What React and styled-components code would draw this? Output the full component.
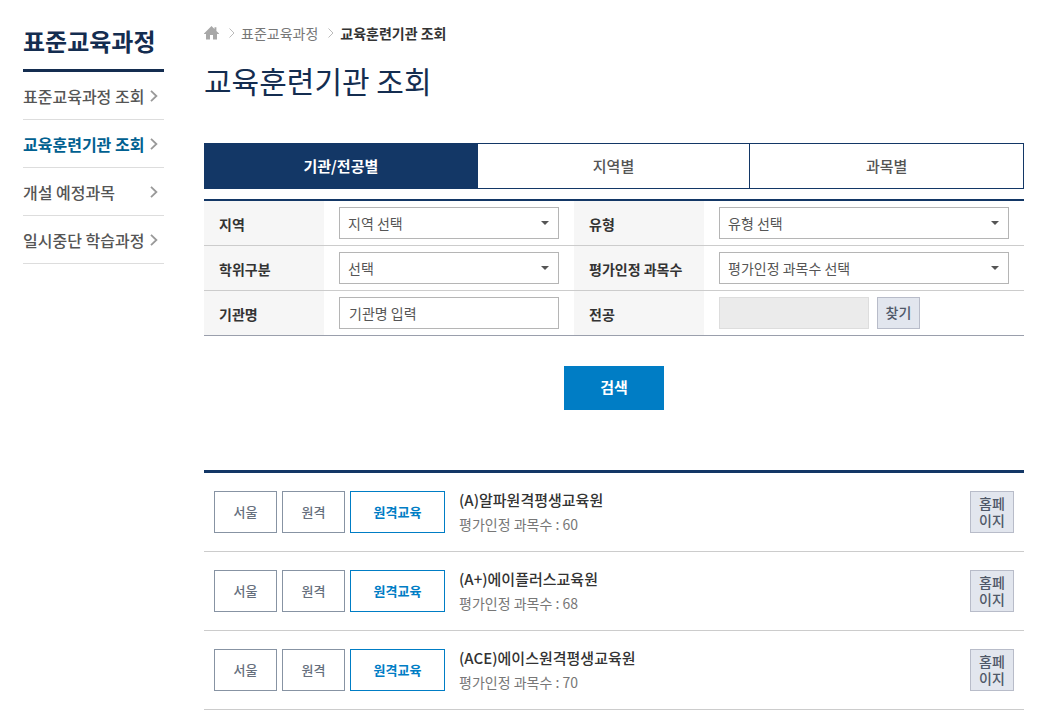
import React, { useState } from 'react';
import styled, { createGlobalStyle } from 'styled-components';

const NAVY = '#133766';
const BLUE = '#007dc5';

const GlobalStyle = createGlobalStyle`
  * { box-sizing: border-box; }
  body {
    margin: 0;
    background: #fff;
    color: #555;
    font-family: 'Noto Sans CJK KR', 'Noto Sans', sans-serif;
    font-size: 14px;
    line-height: 20px;
  }
  h1, h2, h3, p, ul, ol { margin: 0; padding: 0; }
  ul, ol { list-style: none; }
  a { color: inherit; text-decoration: none; }
  button, input, select { font: inherit; color: inherit; border-radius: 0; }
  button { cursor: pointer; }
`;

const Page = styled.div`
  display: flex;
  gap: 40px;
  padding: 23px 28px 0 23px;
`;

const Sidebar = styled.aside`
  flex: 0 0 141px;
`;

const SidebarTitle = styled.h2`
  padding-bottom: 11px;
  border-bottom: 3px solid #142d50;
  color: #142d50;
  font-size: 24px;
  font-weight: 700;
  line-height: 35px;
`;

const MenuLink = styled.a`
  display: flex;
  align-items: center;
  justify-content: space-between;
  height: 48px;
  padding-right: 6px;
  border-bottom: 1px solid #ddd;
  color: ${({ $active }) => ($active ? '#006090' : '#555')};
  font-size: 16px;
  font-weight: ${({ $active }) => ($active ? 700 : 500)};
  white-space: nowrap;

  svg { flex: none; }
`;

const Main = styled.main`
  flex: 1;
  min-width: 0;
`;

const Breadcrumb = styled.ol`
  display: flex;
  align-items: center;
  height: 20px;
  color: #777;

  li { display: flex; align-items: center; }
  li + li { margin-left: 10px; }
  strong { color: #333; font-weight: 700; }
  svg { display: block; }
  li + li svg { margin-right: 6px; }
`;

const PageTitle = styled.h1`
  margin: 15px 0 41px;
  color: #142d50;
  font-size: 30px;
  font-weight: 400;
  line-height: 44px;
`;

const Tabs = styled.div`
  display: grid;
  grid-template-columns: repeat(3, 1fr);
  height: 46px;
  margin-bottom: 10px;
  border: 1px solid ${NAVY};
`;

const Tab = styled.button`
  padding: 0;
  border: 0;
  border-right: 1px solid ${NAVY};
  background: ${({ $active }) => ($active ? NAVY : '#fff')};
  color: ${({ $active }) => ($active ? '#fff' : '#555')};
  font-size: 15px;
  font-weight: ${({ $active }) => ($active ? 700 : 500)};

  &:last-child { border-right: 0; }
`;

const SearchTable = styled.table`
  width: 100%;
  border-top: 2px solid ${NAVY};
  border-spacing: 0;
  table-layout: fixed;

  th, td {
    height: 45px;
    padding: 0 15px;
    border-bottom: 1px solid #ccc;
    text-align: left;
  }
  tr:last-child th, tr:last-child td { border-bottom-color: #9a9fac; }
  th {
    padding-top: 2px;
    background: #f6f6f6;
    color: #333;
    font-weight: 700;
  }
`;

const SelectBox = styled.div`
  position: relative;

  &::after {
    content: '';
    position: absolute;
    top: 14px;
    right: 10px;
    border: 4px solid transparent;
    border-top-color: #555;
    border-bottom: 0;
    pointer-events: none;
  }
`;

const Select = styled.select`
  display: block;
  width: 100%;
  height: 32px;
  padding: 0 24px 0 8px;
  border: 1px solid #b5b5b5;
  background: #fff;
  appearance: none;
`;

const TextInput = styled.input`
  display: block;
  width: ${({ $width }) => $width || '100%'};
  height: 32px;
  padding: 0 9px;
  border: 1px solid #b5b5b5;
  background: #fff;

  &::placeholder { color: #555; opacity: 1; }
  &:disabled { border-color: #ddd; background: #ebebeb; }
`;

const InlineFields = styled.div`
  display: flex;
  gap: 8px;
`;

const GrayButton = styled.button`
  width: 43px;
  padding: 0 0 2px;
  border: 1px solid #b8bcc9;
  background: #e2e6ee;
  color: #4f5868;
  font-weight: 500;
`;

const SearchButton = styled.button`
  display: block;
  width: 100px;
  height: 44px;
  margin: 30px auto 60px;
  padding: 0 0 2px;
  border: 0;
  background: ${BLUE};
  color: #fff;
  font-size: 15px;
  font-weight: 700;
`;

const ResultList = styled.ul`
  border-top: 3px solid ${NAVY};
`;

const ResultItem = styled.li`
  display: flex;
  gap: 5px;
  padding: 18px 10px;
  border-bottom: 1px solid #ccc;
`;

const Badge = styled.span`
  display: flex;
  align-items: center;
  justify-content: center;
  width: ${({ $wide }) => ($wide ? '95px' : '63px')};
  height: 42px;
  border: 1px solid ${({ $wide }) => ($wide ? BLUE : '#8793a3')};
  color: ${({ $wide }) => ($wide ? BLUE : '#666f7d')};
  font-size: 13px;
  font-weight: ${({ $wide }) => ($wide ? 700 : 500)};
`;

const ResultInfo = styled.div`
  flex: 1;
  padding-left: 9px;
  color: #777;
  line-height: 18px;

  h3 {
    margin-bottom: 6px;
    color: #333;
    font-size: 15px;
    font-weight: 500;
  }
`;

const HomepageLink = styled.a`
  display: flex;
  align-items: center;
  width: 44px;
  height: 42px;
  padding: 0 8px;
  border: 1px solid #b8bcc9;
  background: #e2e6ee;
  color: #4f5868;
  font-weight: 500;
  line-height: 17px;
  word-break: break-all;
`;

const menus = ['표준교육과정 조회', '교육훈련기관 조회', '개설 예정과목', '일시중단 학습과정'];
const tabs = ['기관/전공별', '지역별', '과목별'];
const results = [
  { name: '(A)알파원격평생교육원', count: 60 },
  { name: '(A+)에이플러스교육원', count: 68 },
  { name: '(ACE)에이스원격평생교육원', count: 70 },
];

const MenuArrow = () => (
  <svg width="8" height="12" viewBox="0 0 8 12" fill="none" stroke="#999" strokeWidth="1.8" aria-hidden="true">
    <path d="M1 0.8 6.4 6 1 11.2" />
  </svg>
);

const CrumbArrow = () => (
  <svg width="6" height="10" viewBox="0 0 6 10" fill="none" stroke="#bbb" aria-hidden="true">
    <path d="M0.5 0.5 5 5 0.5 9.5" />
  </svg>
);

const HomeIcon = () => (
  <svg width="15" height="14" viewBox="0 0 15 14" fill="#a8a8a8" role="img" aria-label="홈">
    <path d="M7.5 0 10.5 3V1.2H12.4V4.9L15 7.5V8H13V13.5H9V9H6V13.5H2V8H0V7.5Z" />
  </svg>
);

const SelectField = ({ id, placeholder }) => (
  <SelectBox>
    <Select id={id} defaultValue="">
      <option value="">{placeholder}</option>
    </Select>
  </SelectBox>
);

const App = () => {
  const [activeTab, setActiveTab] = useState(0);

  return (
    <>
      <GlobalStyle />
      <Page>
        <Sidebar>
          <SidebarTitle>표준교육과정</SidebarTitle>
          <ul>
            {menus.map((menu, i) => (
              <li key={menu}>
                <MenuLink href="#" $active={i === 1}>
                  {menu}
                  <MenuArrow />
                </MenuLink>
              </li>
            ))}
          </ul>
        </Sidebar>

        <Main>
          <Breadcrumb>
            <li><a href="#"><HomeIcon /></a></li>
            <li><CrumbArrow /><a href="#">표준교육과정</a></li>
            <li><CrumbArrow /><strong>교육훈련기관 조회</strong></li>
          </Breadcrumb>
          <PageTitle>교육훈련기관 조회</PageTitle>

          <Tabs role="tablist">
            {tabs.map((tab, i) => (
              <Tab
                key={tab}
                type="button"
                role="tab"
                aria-selected={i === activeTab}
                $active={i === activeTab}
                onClick={() => setActiveTab(i)}
              >
                {tab}
              </Tab>
            ))}
          </Tabs>

          <form onSubmit={(e) => e.preventDefault()}>
            <SearchTable>
              <colgroup>
                <col style={{ width: 120 }} />
                <col style={{ width: 250 }} />
                <col style={{ width: 130 }} />
                <col />
              </colgroup>
              <tbody>
                <tr>
                  <th scope="row"><label htmlFor="region">지역</label></th>
                  <td><SelectField id="region" placeholder="지역 선택" /></td>
                  <th scope="row"><label htmlFor="type">유형</label></th>
                  <td><SelectField id="type" placeholder="유형 선택" /></td>
                </tr>
                <tr>
                  <th scope="row"><label htmlFor="degree">학위구분</label></th>
                  <td><SelectField id="degree" placeholder="선택" /></td>
                  <th scope="row"><label htmlFor="subjects">평가인정 과목수</label></th>
                  <td><SelectField id="subjects" placeholder="평가인정 과목수 선택" /></td>
                </tr>
                <tr>
                  <th scope="row"><label htmlFor="name">기관명</label></th>
                  <td><TextInput id="name" type="text" placeholder="기관명 입력" /></td>
                  <th scope="row"><label htmlFor="major">전공</label></th>
                  <td>
                    <InlineFields>
                      <TextInput id="major" type="text" $width="150px" disabled />
                      <GrayButton type="button">찾기</GrayButton>
                    </InlineFields>
                  </td>
                </tr>
              </tbody>
            </SearchTable>
            <SearchButton type="submit">검색</SearchButton>
          </form>

          <ResultList>
            {results.map(({ name, count }) => (
              <ResultItem key={name}>
                <Badge>서울</Badge>
                <Badge>원격</Badge>
                <Badge $wide>원격교육</Badge>
                <ResultInfo>
                  <h3>{name}</h3>
                  <p>평가인정 과목수 : {count}</p>
                </ResultInfo>
                <HomepageLink href="#">홈페이지</HomepageLink>
              </ResultItem>
            ))}
          </ResultList>
        </Main>
      </Page>
    </>
  );
};

export default App;
